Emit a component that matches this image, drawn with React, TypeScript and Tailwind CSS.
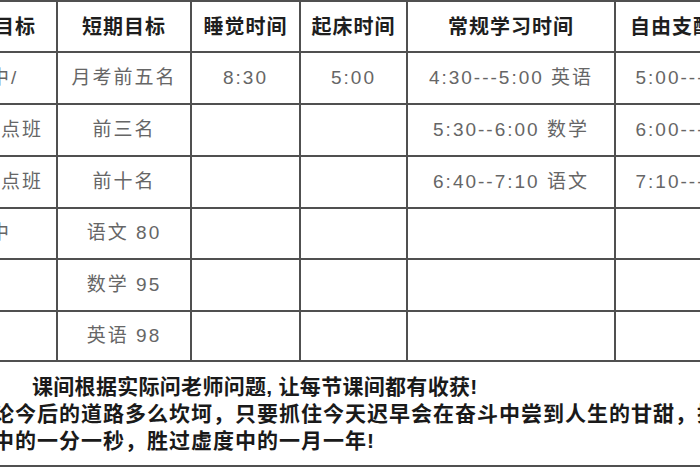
import { Fragment } from "react";

const HEAD = ["短期目标", "睡觉时间", "起床时间", "常规学习时间", "自由支配时间"];

// first column is mostly cut off at the left edge of the shot
const ROWS = [
  { lead: "考一中/", leadPad: "pl-[2px]", cells: ["月考前五名", "8:30", "5:00", "4:30---5:00 英语", "5:00---5:30"] },
  { lead: "进重点班", leadPad: "pl-[13px]", cells: ["前三名", "", "", "5:30--6:00 数学", "6:00---6:30"] },
  { lead: "进重点班", leadPad: "pl-[13px]", cells: ["前十名", "", "", "6:40--7:10 语文", "7:10---7:40"] },
  { lead: "考高中", leadPad: "pl-[2px]", cells: ["语文 80", "", "", "", ""] },
  { lead: "", leadPad: "", cells: ["数学 95", "", "", "", ""] },
  { lead: "", leadPad: "", cells: ["英语 98", "", "", "", ""] },
];

export default function App() {
  return (
    <div className="w-[700px] h-[470px] overflow-hidden bg-white font-['Liberation_Sans','Noto_Sans_CJK_SC',sans-serif]">
      <div className="ml-[-56px] w-[828px]">
        <div className="grid grid-cols-[110px_132px_107px_105px_206px_154px] grid-rows-[49px_50px_50px_50px_49px_50px_48px] gap-[2px] bg-[#505050] border-2 border-[#505050]">
          <div className="bg-white flex items-center pl-[6px] text-[20px] font-bold tracking-[1px] text-[#1e1e1e] whitespace-nowrap">
            长期目标
          </div>
          {HEAD.map((h) => (
            <div key={h} className="bg-white flex items-center justify-center text-[20px] font-bold tracking-[1px] text-[#1e1e1e] whitespace-nowrap">
              {h}
            </div>
          ))}
          {ROWS.map((r, i) => (
            <Fragment key={i}>
              <div className={`bg-white flex items-center ${r.leadPad} text-[19px] tracking-[2px] text-[#666] whitespace-nowrap overflow-hidden`}>
                {r.lead}
              </div>
              {r.cells.map((c, j) => (
                <div key={j} className="bg-white flex items-center justify-center text-[19px] tracking-[2px] text-[#666] whitespace-nowrap overflow-hidden">
                  {c}
                </div>
              ))}
            </Fragment>
          ))}
        </div>
        <div className="h-[105px] border-x-2 border-b-2 border-[#505050] pt-[11px] text-[21px] font-bold leading-[27px] text-[#1a1a1a] whitespace-nowrap overflow-hidden">
          <p className="pl-[86px] tracking-[0.3px]">课间根据实际问老师问题, 让每节课间都有收获!</p>
          <p className="pl-[25px] tracking-[1px]">无论今后的道路多么坎坷，只要抓住今天迟早会在奋斗中尝到人生的甘甜，抓住学</p>
          <p className="pl-[25px] tracking-[1px]">习中的一分一秒，胜过虚度中的一月一年!</p>
        </div>
      </div>
    </div>
  );
}
